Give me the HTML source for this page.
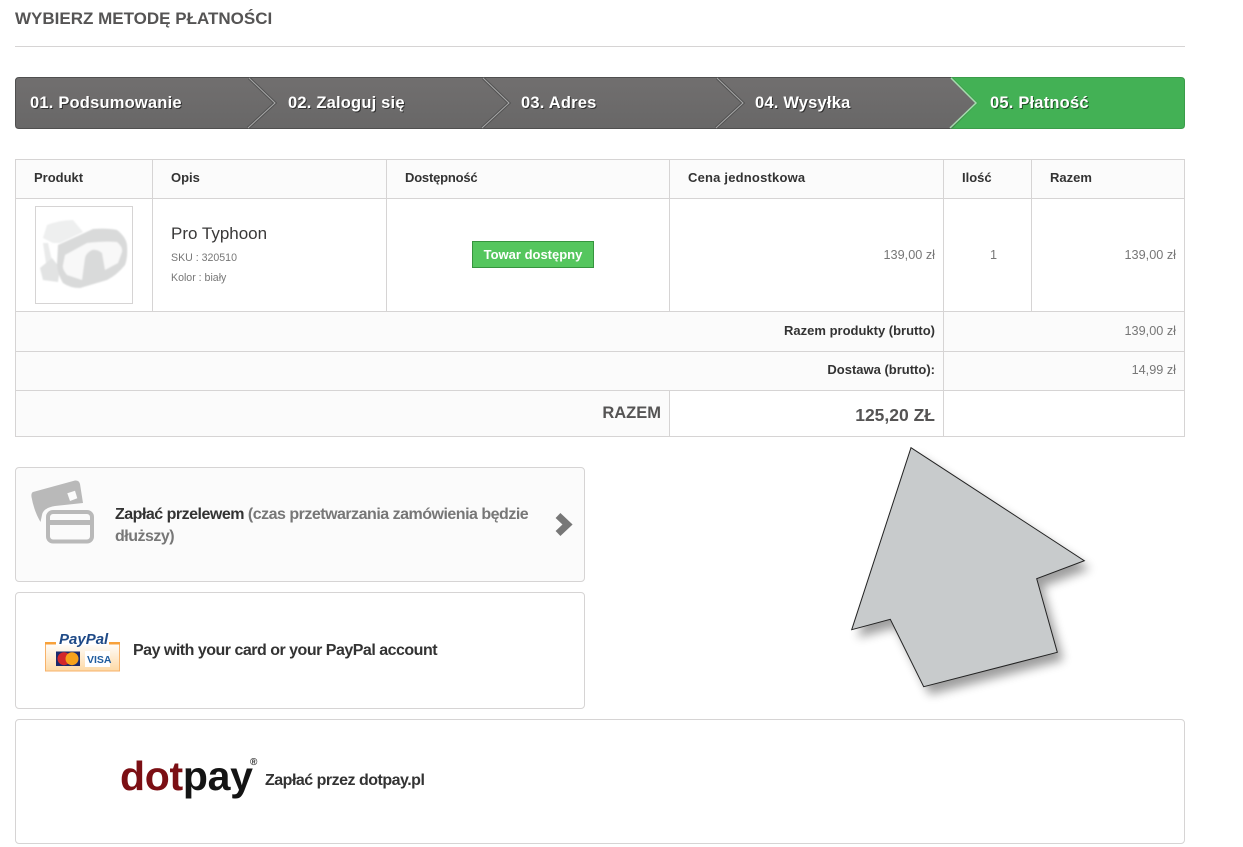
<!DOCTYPE html>
<html lang="pl"><head><meta charset="utf-8"><title>Płatność</title>
<style>
html,body{margin:0;padding:0;background:#fff}
body{width:1243px;height:847px;position:relative;overflow:hidden;font-family:"Liberation Sans",sans-serif;color:#333}
.a{position:absolute;white-space:nowrap}
.l{position:absolute;background:#d6d4d4}
.f{position:absolute;background:#fbfbfb}
.th{font-weight:bold;font-size:13px;color:#333;line-height:16px;top:170px}
.v{font-size:12.700px;color:#777;line-height:16px;text-align:right}
.box{position:absolute;border:1px solid #d6d4d4;border-radius:4px;box-sizing:border-box}
.pay{font-weight:bold;font-size:16px;letter-spacing:-.5px;color:#333}
.step{font-weight:bold;font-size:16.500px;letter-spacing:.2px;color:#fff;line-height:18px;top:94px;text-shadow:1px 1px 0 rgba(0,0,0,.55)}
</style></head><body>
<div class="a" style="left:15px;top:9px;font-size:17px;font-weight:bold;color:#555454;line-height:20px">WYBIERZ METODĘ PŁATNOŚCI</div>
<div class="l" style="left:15px;top:46px;width:1170px;height:1px"></div>

<svg class="a" style="left:0;top:70px" width="1243" height="66" viewBox="0 70 1243 66">
<defs><linearGradient id="g" x1="0" y1="0" x2="0" y2="1"><stop offset="0" stop-color="#716f6f"/><stop offset="1" stop-color="#686767"/></linearGradient></defs>
<path d="M19 77.500H951L976 103 951 128.500H19Q15.500 128.500 15.500 125V81Q15.500 77.500 19 77.500Z" fill="url(#g)" stroke="#4f4f4f"/>
<path d="M952 77.500H1181Q1184.500 77.500 1184.500 81V125Q1184.500 128.500 1181 128.500H952L977 103Z" fill="#43b155" stroke="#3b9c4a"/>
<path d="M249 78 275 103 248 128M483 78 509 103 482 128M717 78 743 103 716 128" fill="none" stroke="#525252" stroke-width="3"/>
<path d="M249 78 275 103 248 128M483 78 509 103 482 128M717 78 743 103 716 128" fill="none" stroke="#a9a9a9" stroke-width="1"/>
<path d="M951 78 976 103 950 128" fill="none" stroke="#a5dcae" stroke-width="1.500"/>
</svg>
<div class="a step" style="left:30px">01. Podsumowanie</div>
<div class="a step" style="left:288px">02. Zaloguj się</div>
<div class="a step" style="left:521px">03. Adres</div>
<div class="a step" style="left:755px">04. Wysyłka</div>
<div class="a step" style="left:990px">05. Płatność</div>

<div class="f" style="left:15px;top:159px;width:1170px;height:40px"></div>
<div class="f" style="left:15px;top:311px;width:929px;height:80px"></div>
<div class="f" style="left:944px;top:311px;width:241px;height:80px"></div>
<div class="f" style="left:15px;top:391px;width:654px;height:46px"></div>

<div class="l" style="left:15px;top:159px;width:1170px;height:1px"></div>
<div class="l" style="left:15px;top:198px;width:1170px;height:1px"></div>
<div class="l" style="left:15px;top:311px;width:1170px;height:1px"></div>
<div class="l" style="left:15px;top:351px;width:1170px;height:1px"></div>
<div class="l" style="left:15px;top:390px;width:1170px;height:1px"></div>
<div class="l" style="left:15px;top:436px;width:1170px;height:1px"></div>
<div class="l" style="left:15px;top:159px;width:1px;height:278px"></div>
<div class="l" style="left:1184px;top:159px;width:1px;height:278px"></div>
<div class="l" style="left:152px;top:159px;width:1px;height:152px"></div>
<div class="l" style="left:386px;top:159px;width:1px;height:152px"></div>
<div class="l" style="left:669px;top:159px;width:1px;height:152px"></div>
<div class="l" style="left:669px;top:390px;width:1px;height:46px"></div>
<div class="l" style="left:943px;top:159px;width:1px;height:278px"></div>
<div class="l" style="left:1031px;top:159px;width:1px;height:152px"></div>

<div class="a th" style="left:34px">Produkt</div>
<div class="a th" style="left:171px">Opis</div>
<div class="a th" style="left:405px;letter-spacing:-.2px">Dostępność</div>
<div class="a th" style="left:688px;letter-spacing:.2px">Cena jednostkowa</div>
<div class="a th" style="left:962px">Ilość</div>
<div class="a th" style="left:1050px">Razem</div>

<div class="box" style="left:35px;top:206px;width:98px;height:98px;border-radius:0"></div>
<svg class="a" style="left:36px;top:207px" width="96" height="96" viewBox="0 0 96 96">
<defs><filter id="b" x="-10%" y="-10%" width="120%" height="120%"><feGaussianBlur stdDeviation=".8"/></filter></defs>
<g filter="url(#b)">
<path d="M11 18Q24 13 37 13L47 25 24 36 17 36 7 31Z" fill="#eeefef"/>
<path d="M7 36 12 36 16 54 10 56Z" fill="#e9eaea"/>
<path d="M4 61 16 51 24 61 22 75 7 73Z" fill="#e2e3e3"/>
<path d="M22 38 57 22Q72 21 81 23 90 30 91 38 92 50 89 58 81 68 71 73L44 81Q34 81 27 76 22 68 21 58Z" fill="#d9dada"/>
<path d="M29 48 51 36Q68 34 81 35 87 40 86 45L82 56 69 63 66 46Q61 42 56 43 50 46 49 51L46 73 31 68Q26 62 27 58Z" fill="#f8f8f8"/>
</g>
</svg>

<div class="a" style="left:171px;top:224px;font-size:17px;line-height:20px;color:#3a3939">Pro Typhoon</div>
<div class="a" style="left:171px;top:251px;font-size:10.600px;line-height:14px;color:#777">SKU : 320510</div>
<div class="a" style="left:171px;top:271px;font-size:10.600px;line-height:14px;color:#777">Kolor : biały</div>

<div class="a" style="left:472px;top:241px;width:122px;height:27px;box-sizing:border-box;background:#55c65e;border:1px solid #36943e;color:#fff;font-weight:bold;font-size:13px;line-height:25px;text-align:center">Towar dostępny</div>

<div class="a v" style="right:308px;top:247px">139,00 zł</div>
<div class="a v" style="left:990px;top:247px">1</div>
<div class="a v" style="right:67px;top:247px">139,00 zł</div>

<div class="a" style="right:308px;top:323px;font-size:13px;font-weight:bold;line-height:16px;color:#333">Razem produkty (brutto)</div>
<div class="a v" style="right:67px;top:323px">139,00 zł</div>
<div class="a" style="right:308px;top:362px;font-size:13px;font-weight:bold;line-height:16px;color:#333">Dostawa (brutto):</div>
<div class="a v" style="right:67px;top:362px">14,99 zł</div>
<div class="a" style="right:582px;top:403px;font-size:16.500px;font-weight:bold;line-height:20px;color:#555454">RAZEM</div>
<div class="a" style="right:308px;top:405px;font-size:17.500px;font-weight:bold;line-height:20px;color:#555454">125,20 ZŁ</div>

<svg class="a" style="left:840px;top:440px;overflow:visible" width="270" height="270" viewBox="840 440 270 270">
<defs><filter id="s" x="-20%" y="-20%" width="140%" height="140%"><feGaussianBlur stdDeviation="5"/></filter></defs>
<path d="M911 447.700 1084.300 560.700 1036.700 578.700 1057.300 652.300 923.700 686.700 890.300 619.300 851.700 629.700Z" fill="#000" opacity=".38" transform="translate(6 8)" filter="url(#s)"/>
<path d="M911 447.700 1084.300 560.700 1036.700 578.700 1057.300 652.300 923.700 686.700 890.300 619.300 851.700 629.700Z" fill="#c8cbcc" stroke="#222" stroke-width="1"/>
</svg>

<div class="box" style="left:15px;top:467px;width:570px;height:115px;background:#fbfbfb"></div>
<svg class="a" style="left:25px;top:475px" width="80" height="75" viewBox="0 0 80 75">
<path d="M8 17 50 5.500Q54 5 55 9L58 28 30 31Q18 33 17 40L15.500 47Q9 36 6.500 22 6 18 8 17Z" fill="#b9b9b9"/>
<path d="M42.300 18.300 50 15.700 52.300 23.300 45 26Z" fill="#fbfbfb"/>
<rect x="23" y="37" width="44" height="29.500" rx="5" fill="none" stroke="#b9b9b9" stroke-width="4"/>
<rect x="23" y="45" width="44" height="5" fill="#b9b9b9"/>
</svg>
<div class="a pay" style="left:115px;top:504px;line-height:22px;white-space:normal;width:430px">Zapłać przelewem <span style="color:#777">(czas przetwarzania zamówienia będzie dłuższy)</span></div>
<svg class="a" style="left:552px;top:511px" width="24" height="28" viewBox="0 0 24 28">
<path d="M6 4.500 15.500 13.500 6 22.500" fill="none" stroke="#777" stroke-width="7"/>
</svg>

<div class="box" style="left:15px;top:592px;width:570px;height:117px"></div>
<svg class="a" style="left:44px;top:630px" width="78" height="42" viewBox="0 0 78 42">
<defs><linearGradient id="o" x1="0" y1="0" x2="0" y2="1"><stop offset="0" stop-color="#fff"/><stop offset="1" stop-color="#fdd9a5"/></linearGradient></defs>
<rect x="1.500" y="12.500" width="74" height="28.500" fill="url(#o)" stroke="#f7b26a"/>
<rect x="12" y="10" width="53" height="5" fill="#fff"/>
<rect x="1" y="12" width="11" height="2.500" fill="#f7a13a"/><rect x="65" y="12" width="11" height="2.500" fill="#f7a13a"/>
<text x="15" y="14" font-family="Liberation Sans" font-size="15" font-weight="bold" font-style="italic" fill="#1f4a87">PayPal</text>
<rect x="12" y="21.500" width="24" height="14.500" fill="#1a2a6c"/><circle cx="20" cy="28.700" r="6.500" fill="#d3272c"/><circle cx="28" cy="28.700" r="6.500" fill="#f7a21b"/>
<rect x="41" y="21" width="25" height="16" fill="#fff"/>
<text x="43" y="33" font-family="Liberation Sans" font-size="10.500" font-weight="bold" fill="#1f5c9e">VISA</text>
</svg>
<div class="a pay" style="left:133px;top:641px;line-height:20px">Pay with your card or your PayPal account</div>

<div class="box" style="left:15px;top:719px;width:1170px;height:125px"></div>
<div class="a" style="left:120px;top:751px;font-weight:bold;font-size:41px;line-height:50px;letter-spacing:-.3px;color:#141414"><span style="color:#7b0f14">dot</span>pay</div>
<div class="a" style="left:250px;top:757px;font-size:10px;font-weight:bold;line-height:12px;color:#333">®</div>
<div class="a pay" style="left:265px;top:771px;line-height:20px">Zapłać przez dotpay.pl</div>
</body></html>
